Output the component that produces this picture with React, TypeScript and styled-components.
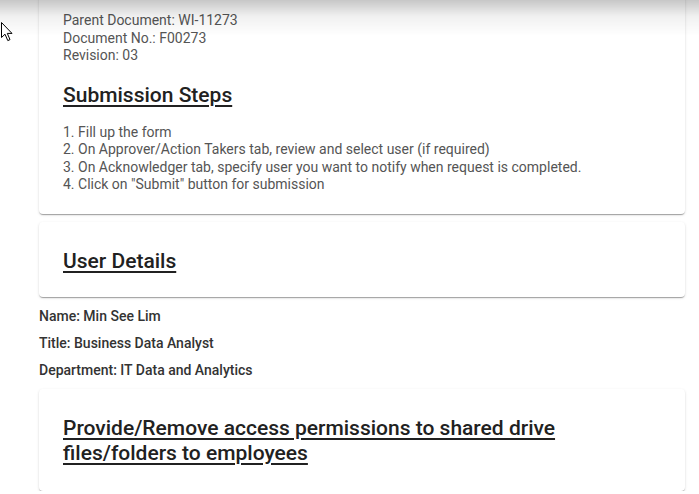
import React from 'react'
import styled, { createGlobalStyle } from 'styled-components'

const GlobalStyle = createGlobalStyle`
  html, body {
    margin: 0;
    padding: 0;
    background: #fff;
    font-family: Roboto, "Liberation Sans", Arial, sans-serif;
    overflow: hidden;
  }
`

const Page = styled.div`
  width: 646px;
  padding-left: 39px;
  margin-top: -12px;
  display: flex;
  flex-direction: column;
`

const Card = styled.div<{ $gap?: number }>`
  background: #fff;
  border-radius: 4px;
  box-shadow: 0px 2px 1px -1px rgba(0, 0, 0, 0.2), 0px 1px 1px 0px rgba(0, 0, 0, 0.14),
    0px 1px 3px 0px rgba(0, 0, 0, 0.12);
  padding: 24px 24px 20px;
  margin-bottom: ${p => p.$gap ?? 0}px;
`

const InfoLine = styled.div`
  font-size: 14px;
  line-height: 17.5px;
  color: #555;
`

const SectionTitle = styled.h2<{ $top: number; $bottom: number }>`
  margin: ${p => p.$top}px 0 ${p => p.$bottom}px;
  font-size: 21px;
  font-weight: 500;
  line-height: 25px;
  color: #212121;
  text-decoration: underline;
  text-decoration-thickness: 2px;
  text-underline-offset: 3px;
`

const StepList = styled.div`
  font-size: 14px;
  line-height: 17.5px;
  color: #555;
`

const Details = styled.div`
  padding: 6px 0 5px;
`

const DetailLine = styled.div`
  font-size: 14px;
  font-weight: 500;
  line-height: 27px;
  color: #333;
`

const TopShade = styled.div`
  position: fixed;
  top: 0;
  left: 0;
  right: 0;
  height: 36px;
  background: linear-gradient(rgba(0, 0, 0, 0.22), rgba(0, 0, 0, 0.06) 45%, rgba(0, 0, 0, 0));
  pointer-events: none;
`

const Cursor = styled.svg`
  position: fixed;
  left: 1px;
  top: 22px;
`

const steps = [
  '1. Fill up the form',
  '2. On Approver/Action Takers tab, review and select user (if required)',
  '3. On Acknowledger tab, specify user you want to notify when request is completed.',
  '4. Click on "Submit" button for submission',
]

const details = ['Name: Min See Lim', 'Title: Business Data Analyst', 'Department: IT Data and Analytics']

export default function App() {
  return (
    <>
      <GlobalStyle />
      <Page>
        <Card $gap={8}>
          <InfoLine>Parent Document: WI-11273</InfoLine>
          <InfoLine>Document No.: F00273</InfoLine>
          <InfoLine>Revision: 03</InfoLine>
          <SectionTitle $top={18} $bottom={16}>Submission Steps</SectionTitle>
          <StepList>
            {steps.map(s => (
              <div key={s}>{s}</div>
            ))}
          </StepList>
        </Card>
        <Card>
          <SectionTitle $top={3} $bottom={3}>User Details</SectionTitle>
        </Card>
        <Details>
          {details.map(d => (
            <DetailLine key={d}>{d}</DetailLine>
          ))}
        </Details>
        <Card>
          <SectionTitle $top={3} $bottom={5}>
            Provide/Remove access permissions to shared drive files/folders to employees
          </SectionTitle>
        </Card>
      </Page>
      <TopShade />
      <Cursor width="13" height="20" viewBox="0 0 13 20">
        <path
          d="M0.5 0.5 L0.5 15.5 L4 12.2 L6.8 18.6 L9 17.6 L6.3 11.4 L11 11.4 Z"
          fill="#fff"
          stroke="#000"
          strokeWidth="1"
          strokeLinejoin="miter"
        />
      </Cursor>
    </>
  )
}
